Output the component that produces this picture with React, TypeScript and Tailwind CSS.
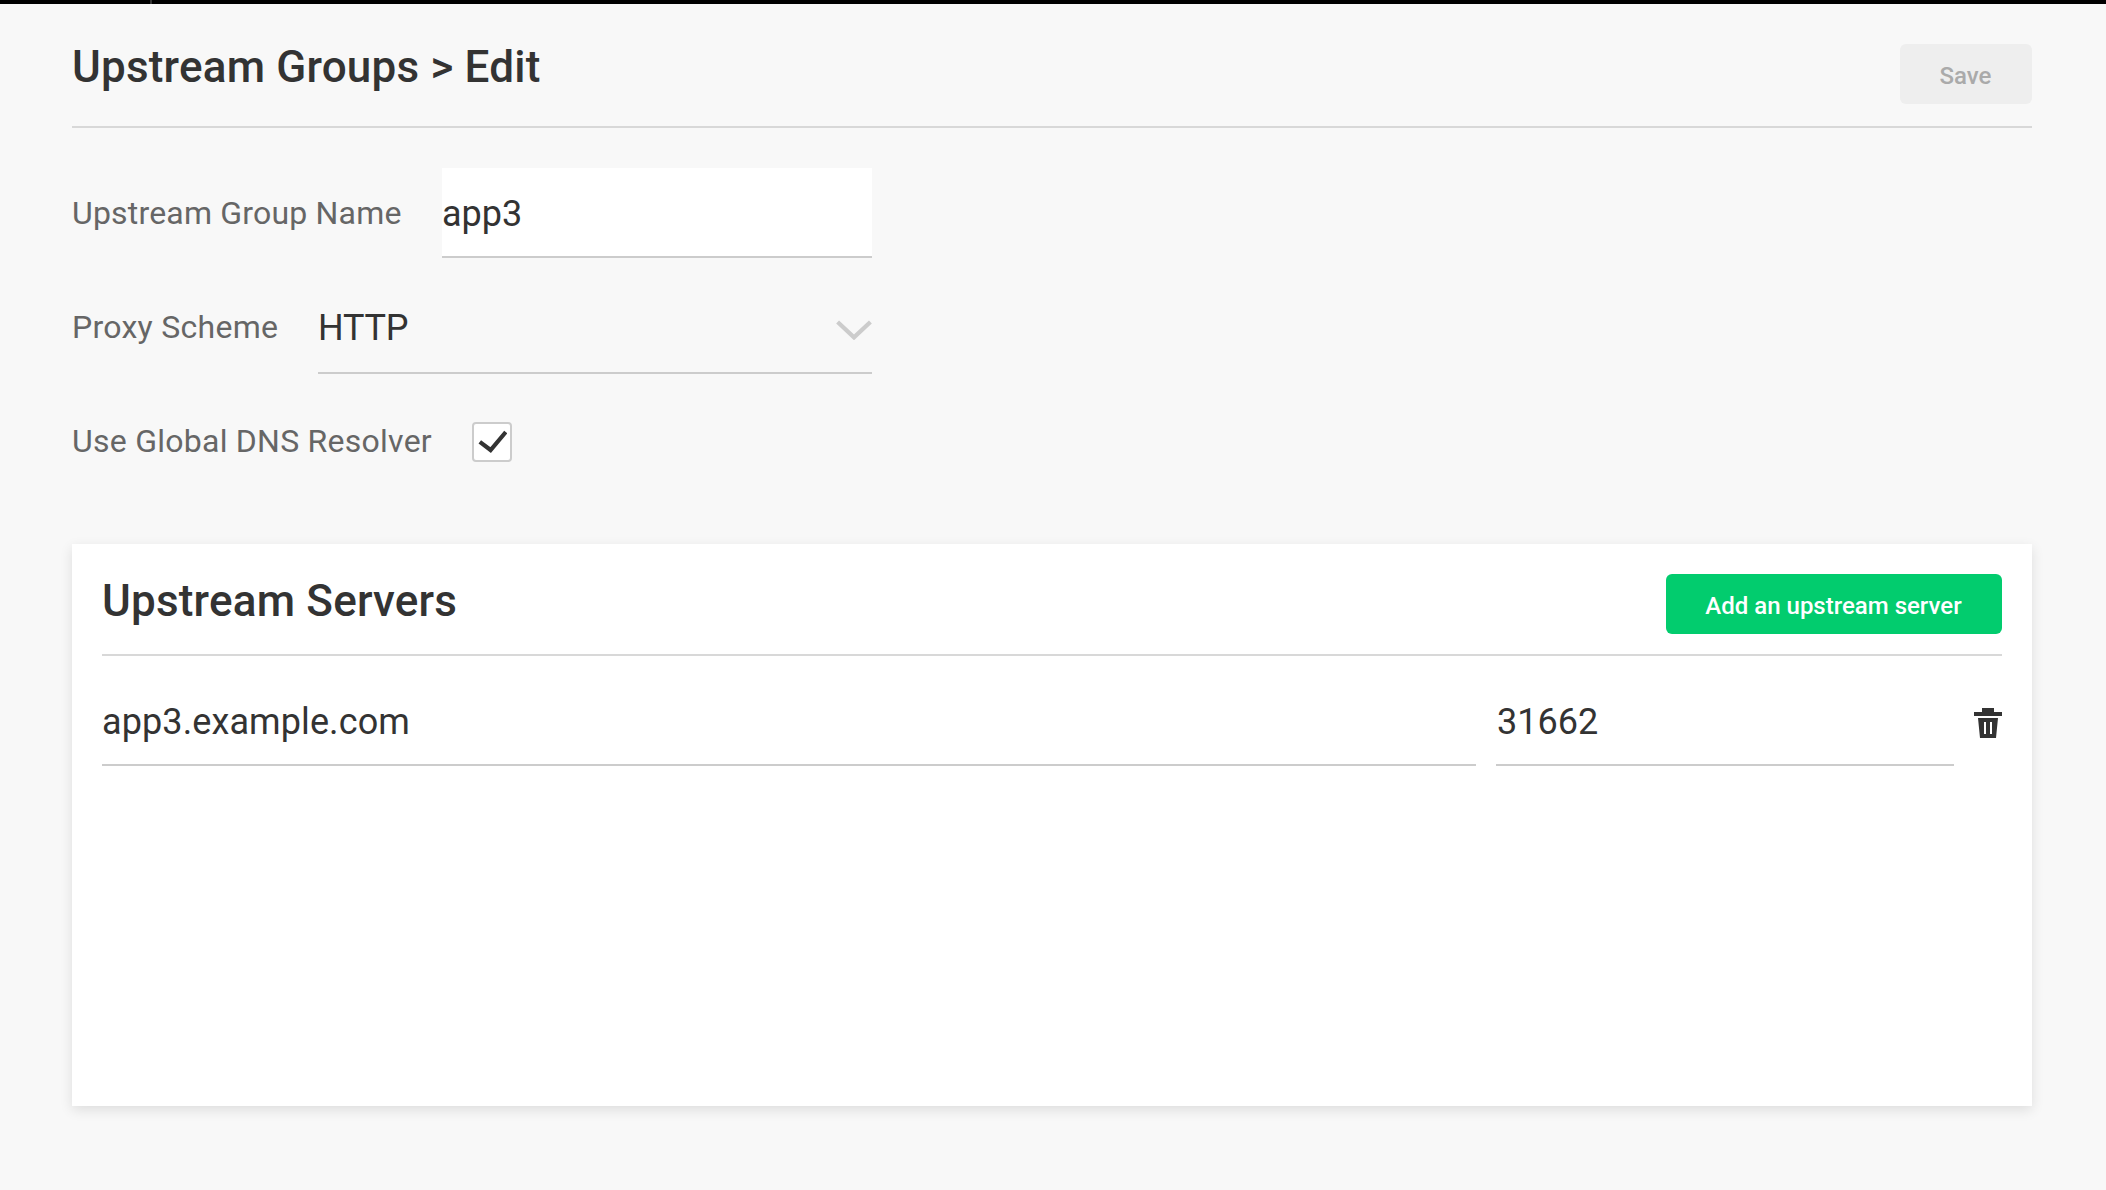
import React from "react";

function ChevronDown() {
  return (
    <svg width="36" height="20" viewBox="0 0 36 20" fill="none" className="shrink-0">
      <path d="M1.6 2 L18 17.4 L34.4 2" stroke="#cccccc" strokeWidth="4.2" />
    </svg>
  );
}

function CheckMark() {
  return (
    <svg width="30" height="24" viewBox="0 0 30 24" fill="none" className="shrink-0">
      <path d="M2.8 11.8 L13.6 20 L28.8 2" stroke="#333333" strokeWidth="4.2" />
    </svg>
  );
}

function TrashIcon() {
  return (
    <svg width="28" height="30" viewBox="0 0 28 30" fill="#333333">
      <path d="M8 0h12v4h8v4H0V4h8z" />
      <path fillRule="evenodd" d="M4 10h20l-2 20H6zM10 14v12h2V14zM16 14v12h2V14z" />
    </svg>
  );
}

const labelClass = "shrink-0 whitespace-nowrap text-[32px] leading-10 text-[#666666]";

export default function App() {
  return (
    <div className="flex h-[1190px] w-[2106px] flex-col overflow-hidden bg-[#f8f8f8] font-['Roboto',sans-serif] text-[#333333]">
      <div className="flex h-1 shrink-0 bg-black pl-[150px]">
        <div className="w-0.5 bg-[#333333]" />
      </div>

      <div className="flex flex-col px-[72px] pr-[74px]">
        <header className="flex h-[124px] items-start justify-between border-b-2 border-[#d8d8d8]">
          <h1 className="mt-[35px] text-[44px] leading-[56px] font-medium tracking-[0.2px]">
            Upstream Groups &gt; Edit
          </h1>
          <button
            disabled
            className="mt-10 h-[60px] w-[132px] rounded-md bg-[#eeeeee] pt-1 pr-px text-2xl leading-7 font-medium text-[#aaaaaa]"
          >
            Save
          </button>
        </header>

        <form className="mt-10 flex w-[800px] flex-col">
          <div className="flex h-[90px] items-center">
            <label className={`${labelClass} w-[370px] tracking-[0.19px]`}>Upstream Group Name</label>
            <input
              type="text"
              defaultValue="app3"
              className="h-[90px] min-w-0 flex-1 border-b-2 border-[#cccccc] bg-white pt-[3px] text-4xl outline-none"
            />
          </div>

          <div className="mt-[26px] flex h-[90px] items-center">
            <label className={`${labelClass} w-[246px] pb-1 tracking-[0.27px]`}>Proxy Scheme</label>
            <div className="flex h-[90px] flex-1 items-center justify-between border-b-2 border-[#cccccc]">
              <span className="text-4xl leading-10 tracking-[-0.25px]">HTTP</span>
              <span className="pt-[4px]">
                <ChevronDown />
              </span>
            </div>
          </div>

          <div className="mt-[37px] flex h-[62px] items-center">
            <label className={`${labelClass} w-[400px] pb-[2px] tracking-[0.25px]`}>
              Use Global DNS Resolver
            </label>
            <span className="flex h-10 w-10 items-center justify-center rounded-[4px] border-2 border-[#cccccc] bg-white">
              <CheckMark />
            </span>
          </div>
        </form>

        <section className="mt-[71px] flex h-[562px] flex-col bg-white px-[30px] shadow-[0_4px_12px_rgba(0,0,0,0.11)]">
          <div className="flex h-[112px] items-start justify-between border-b-2 border-[#d8d8d8]">
            <h2 className="mt-[29px] text-[44px] leading-[56px] font-medium tracking-[0.2px]">
              Upstream Servers
            </h2>
            <button className="mt-[30px] h-[60px] w-[336px] rounded-md bg-[#02cc6e] pt-1 pr-px text-2xl leading-7 font-medium text-white">
              Add an upstream server
            </button>
          </div>

          <div className="mt-5 flex h-[90px] items-center">
            <input
              type="text"
              defaultValue="app3.example.com"
              className="h-[90px] w-[1374px] border-b-2 border-[#cccccc] pt-[3px] text-4xl tracking-[0.1px] outline-none"
            />
            <input
              type="text"
              defaultValue="31662"
              className="ml-5 h-[90px] w-[458px] border-b-2 border-[#cccccc] pt-[3px] pl-px text-4xl outline-none"
            />
            <button className="ml-5 pt-1" aria-label="Delete server">
              <TrashIcon />
            </button>
          </div>
        </section>
      </div>
    </div>
  );
}
